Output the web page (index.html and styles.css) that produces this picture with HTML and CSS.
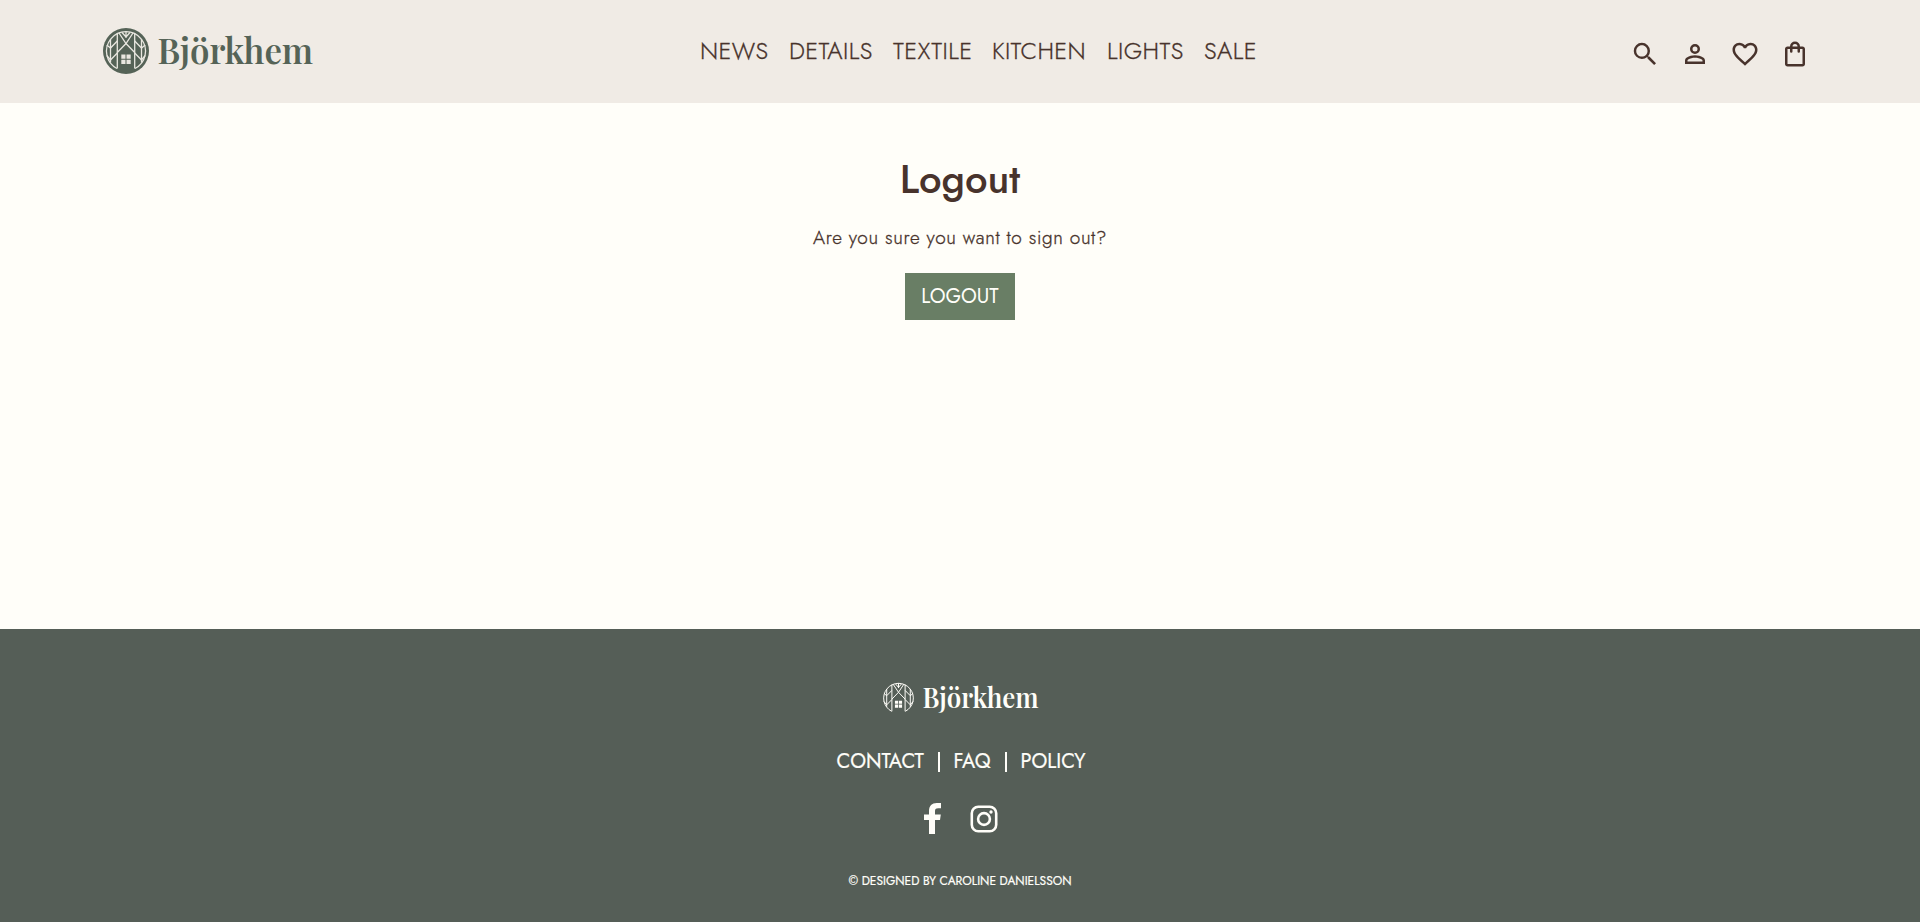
FILE: index.html
```html
<!DOCTYPE html>
<html lang="en">
<head>
<meta charset="utf-8">
<title>Björkhem</title>
<link rel="stylesheet" href="styles.css">
</head>
<body>
<svg class="defs" width="0" height="0" aria-hidden="true">
  <symbol id="forest" viewBox="0 0 46 46">
    <g fill="none" stroke="currentColor" stroke-width="1.3">
      <path d="M14 40.500A19.500 19.500 0 1 1 32 40.500"/>
      <path d="M14.300 5.500V40.500M31.700 5.500V40.500"/>
      <path d="M7.500 11V34.500M38.500 11V34.500"/>
      <path d="M14.300 13L7.500 20L3.800 17M14.300 25L7.500 32L3.800 27.500M31.700 13L38.500 20L42.200 17M31.700 25L38.500 32L42.200 27.500"/>
      <path d="M23 3.500V10M19 4.500L23 9L27 4.500M16 5L23 15.500L31.700 24.500M30 5L23 15.500L14.300 24.500"/>
    </g>
    <path fill="currentColor" d="M18.300 26.500h4.200v4.200h-4.200zM23.500 26.500h4.200v4.200h-4.200zM18.300 31.700h4.200v4.200h-4.200zM23.500 31.700h4.200v4.200h-4.200z"/>
  </symbol>
</svg>
<header class="header">
  <a class="brand">
    <svg width="220" height="64" viewBox="0 0 220 64">
      <circle class="disc" cx="23" cy="27" r="23"/>
      <use class="trees" href="#forest" x="0" y="4" width="46" height="46"/>
      <text class="wordmark" x="54.500" y="40" textLength="155.500" lengthAdjust="spacingAndGlyphs">Björkhem</text>
    </svg>
  </a>
  <nav class="nav">
    <a class="news">NEWS</a><a class="details">DETAILS</a><a class="textile">TEXTILE</a><a class="kitchen">KITCHEN</a><a class="lights">LIGHTS</a><a class="sale">SALE</a>
  </nav>
  <div class="tools">
    <svg viewBox="0 0 24 24"><path d="M15.500 14h-.79l-.28-.27A6.471 6.471 0 0 0 16 9.500 6.500 6.500 0 1 0 9.500 16c1.610 0 3.090-.59 4.230-1.570l.27.28v.79l5.300 5.300L20.800 19.300l-5.300-5.300zm-6 0C7.010 14 5 11.990 5 9.500S7.010 5 9.500 5 14 7.010 14 9.500 11.990 14 9.500 14z"/></svg>
    <svg viewBox="0 0 24 24"><path d="M12 4a4 4 0 1 0 0 8 4 4 0 0 0 0-8zm0 2a2 2 0 1 1 0 4 2 2 0 0 1 0-4zM4 20v-2.800c0-1.100.6-2 1.500-2.500C7.400 13.700 9.600 13 12 13s4.600.7 6.500 1.700c.9.500 1.500 1.400 1.500 2.500V20zm2-2h12v-.8c0-.4-.2-.7-.5-.9C15.900 15.500 14 15 12 15s-3.900.5-5.500 1.300c-.3.200-.5.500-.5.900z"/></svg>
    <svg class="heart" viewBox="0 0 24 24"><path d="M16.500 3c-1.740 0-3.410.81-4.500 2.090C10.910 3.810 9.240 3 7.500 3 4.420 3 2 5.420 2 8.500c0 3.780 3.400 6.860 8.550 11.540L12 21.350l1.450-1.320C18.600 15.360 22 12.280 22 8.500 22 5.420 19.580 3 16.500 3zm-4.400 15.550l-.1.100-.1-.1C7.140 14.240 4 11.390 4 8.500 4 6.500 5.500 5 7.500 5c1.540 0 3.040.99 3.570 2.360h1.870C13.460 5.990 14.960 5 16.500 5c2 0 3.500 1.500 3.500 3.500 0 2.890-3.140 5.740-7.900 10.050z"/></svg>
    <svg viewBox="0 0 24 24"><path d="M6 22c-1.100 0-2-.9-2-2V8c0-1.100.9-2 2-2h2a4 4 0 0 1 8 0h2c1.100 0 2 .9 2 2v12c0 1.100-.9 2-2 2zm0-2h12V8h-2v2a1 1 0 0 1-2 0V8h-4v2a1 1 0 0 1-2 0V8H6zM10 6h4a2 2 0 0 0-4 0z"/></svg>
  </div>
</header>
<main class="main">
  <h1 class="title">Logout</h1>
  <p class="question">Are you sure you want to sign out?</p>
  <button class="button" type="button">LOGOUT</button>
</main>
<footer class="footer">
  <svg class="footer-brand" width="164" height="50" viewBox="0 0 164 50">
    <use href="#forest" x="3" y="1.500" width="35" height="35"/>
    <text class="wordmark-small" x="44.500" y="29" textLength="116" lengthAdjust="spacingAndGlyphs">Björkhem</text>
  </svg>
  <div class="links"><a class="contact">CONTACT</a><i></i><a class="faq">FAQ</a><i></i><a class="policy">POLICY</a></div>
  <div class="social">
    <svg width="18" height="31" viewBox="0 0 18 31"><path fill="currentColor" d="M5 31V17H0v-5.500h5V8C5 2.800 8 0 12.700 0H17v5.300h-2.800C11.500 5.300 11 6.600 11 8.300v3.200h5.800L16 17h-5v14z"/></svg>
    <svg width="28" height="28" viewBox="0 0 28 28" fill="none" stroke="currentColor" stroke-width="2.600"><rect x="1.800" y="1.800" width="24.400" height="24.400" rx="6.500"/><circle cx="14" cy="14" r="5.900"/><circle cx="21" cy="7" r="1.700" fill="currentColor" stroke="none"/></svg>
  </div>
  <p class="credit">© DESIGNED BY CAROLINE DANIELSSON</p>
</footer>
</body>
</html>
```
FILE: styles.css
```css
* { box-sizing: border-box; }
body {
  margin: 0;
  min-height: 922px;
  display: flex;
  flex-direction: column;
  background: #fffef9;
  color: #48332c;
  font-family: Jost, Lato, sans-serif;
}
.defs { position: absolute; }
svg { display: block; }
.header {
  height: 103px;
  padding: 0 110px 0 103px;
  display: flex;
  align-items: flex-start;
  background: #f0ebe5;
}
.brand { margin-top: 24px; width: 220px; }
.disc { fill: #556357; }
.trees { color: #e9e7e0; }
.wordmark, .wordmark-small {
  font-family: "Playfair Display", "Liberation Serif", serif;
  font-weight: 600;
  font-size: 36px;
  fill: #556357;
}
.wordmark-small { font-size: 28px; fill: #fffef9; }
.nav {
  margin-left: 377px;
  margin-top: 36px;
  display: flex;
  gap: 20px;
  font-size: 24px;
  font-weight: 300;
  letter-spacing: 0.4px;
  line-height: 30px;
  white-space: nowrap;
  -webkit-text-stroke: 0.3px currentColor;
}
.news { width: 69px; }
.details { width: 84px; }
.textile { width: 79px; }
.kitchen { width: 95px; }
.lights { width: 77px; }
.sale { width: 53px; }
.tools {
  margin-left: auto;
  margin-top: 39px;
  display: flex;
  gap: 20px;
}
.tools svg { width: 30px; height: 30px; fill: #48332c; }
.main {
  flex: 1;
  display: flex;
  flex-direction: column;
  align-items: center;
}
.title { margin: 51px 0 0; font-size: 40px; font-weight: 500; line-height: 50px; }
.question {
  margin: 20px 0 0;
  font-size: 19px;
  font-weight: 300;
  letter-spacing: 0.62px;
  line-height: 28px;
  -webkit-text-stroke: 0.3px currentColor;
}
.button {
  width: 110px;
  height: 47px;
  margin-top: 21px;
  padding: 0;
  border: 0;
  background: #697e65;
  color: #fffef9;
  font-family: inherit;
  font-size: 20px;
}
.footer {
  height: 293px;
  background: #555e57;
  color: #fffef9;
  display: flex;
  flex-direction: column;
  align-items: center;
}
.footer-brand { margin-top: 50px; }
.links {
  margin-top: 17px;
  padding-left: 1px;
  height: 30px;
  display: flex;
  align-items: center;
  font-size: 20px;
  white-space: nowrap;
  -webkit-text-stroke: 0.2px currentColor;
}
.links i { width: 2px; height: 20px; margin: 1px 14px 0; background: currentColor; }
.contact { width: 87px; }
.faq { width: 37px; }
.policy { width: 64px; }
.social { margin-top: 27px; padding-left: 2px; display: flex; align-items: center; gap: 28px; }
.credit { margin: 37px 0 0; font-size: 12px; line-height: 20px; -webkit-text-stroke: 0.2px currentColor; }
```
